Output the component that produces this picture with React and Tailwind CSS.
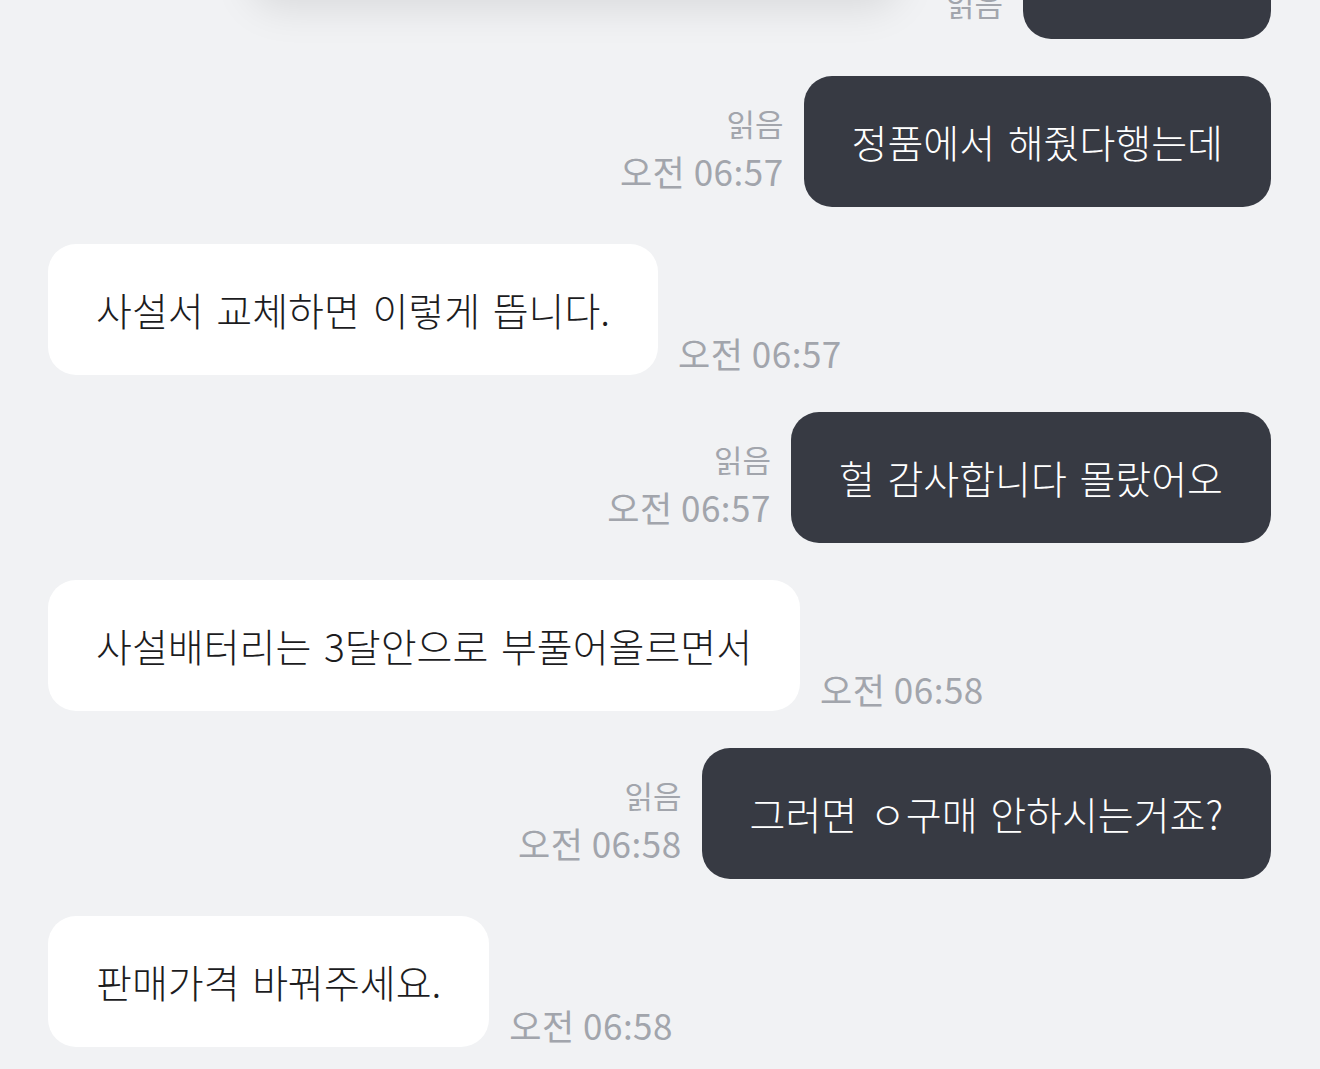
import React from "react";

const font = { fontFamily: '"Noto Sans CJK KR", "Noto Sans", sans-serif' };

function Meta({ read, time }) {
  return (
    <div className="flex flex-col items-end mb-[12px] mr-[20px] text-[#a2a5ac] whitespace-nowrap">
      {read && <span className="text-[31px] leading-[48px]">읽음</span>}
      {time && <span className="text-[35px] leading-[48px] tracking-[0.5px]">{time}</span>}
    </div>
  );
}

function Mine({ text, read, time, className = "" }) {
  return (
    <div className={"flex justify-end items-end " + className}>
      <Meta read={read} time={time} />
      <div className="h-[131px] flex items-center px-[48px] rounded-[28px] bg-[#373a43] text-white text-[39px] [word-spacing:4px] font-light whitespace-nowrap">
        {text}
      </div>
    </div>
  );
}

function Theirs({ text, time }) {
  return (
    <div className="flex items-end">
      <div className="h-[131px] flex items-center px-[48px] rounded-[28px] bg-white text-[#1c1c1e] text-[39px] [word-spacing:4px] font-light whitespace-nowrap">
        {text}
      </div>
      <div className="ml-[20px] mb-[-2px] text-[35px] leading-[48px] tracking-[0.5px] text-[#a2a5ac] whitespace-nowrap">
        {time}
      </div>
    </div>
  );
}

export default function App() {
  return (
    <div style={font} className="relative w-[1320px] h-[1069px] overflow-hidden bg-[#f1f2f4]">
      <div className="absolute left-[250px] top-[-120px] w-[650px] h-[120px] rounded-[30px] bg-[#f1f2f4] shadow-[0_8px_40px_rgba(0,0,0,0.10)]" />
      <div className="flex flex-col gap-[37px] pl-[48px] pr-[49px] mt-[-92px]">
        <Mine text="" read className="[&>div:last-child]:w-[248px]" />
        <Mine text="정품에서 해줬다행는데" read time="오전 06:57" />
        <Theirs text="사설서 교체하면 이렇게 뜹니다." time="오전 06:57" />
        <Mine text="헐 감사합니다 몰랐어오" read time="오전 06:57" />
        <Theirs text="사설배터리는 3달안으로 부풀어올르면서" time="오전 06:58" />
        <Mine text="그러면 ㅇ구매 안하시는거죠?" read time="오전 06:58" />
        <Theirs text="판매가격 바꿔주세요." time="오전 06:58" />
      </div>
    </div>
  );
}
